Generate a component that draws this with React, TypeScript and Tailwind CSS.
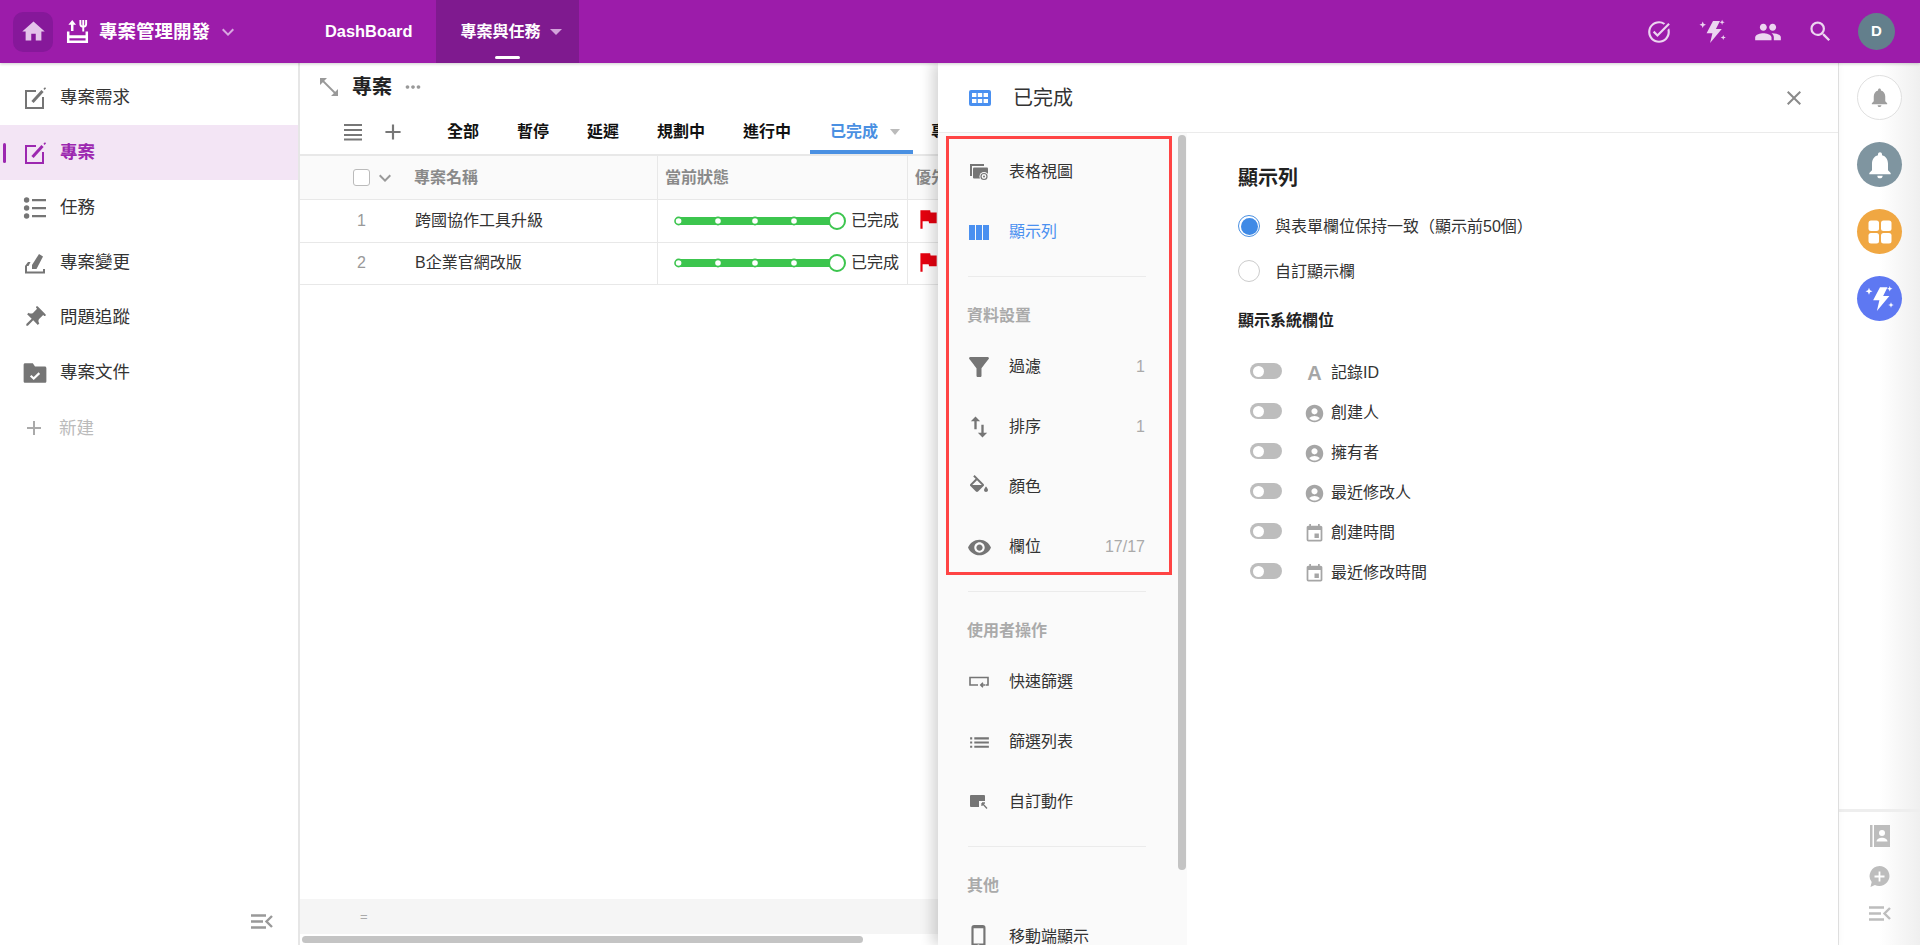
import { ReactNode } from "react";
import {
  MdAccountCircle,
  MdAdd,
  MdClose,
  MdEvent,
  MdFilterAlt,
  MdFlag,
  MdHome,
  MdKeyboardArrowDown,
  MdList,
  MdMoreHoriz,
  MdNotifications,
  MdOutlineTaskAlt,
  MdPeople,
  MdPhoneIphone,
  MdPushPin,
  MdSearch,
  MdSwapVert,
  MdVisibility,
} from "react-icons/md";

function AppIcon() {
  return (
    <svg width="23" height="23" viewBox="0 0 24 24" fill="currentColor">
      <path d="M6.5 0 L2.5 5 H5.2 V11.5 H7.8 V5 H10.5 Z" />
      <path d="M14 0 h2 v4.5 a1.6 1.6 0 0 0 1 1.4 V0 h2 v5.9 a1.6 1.6 0 0 0 1-1.4 V0 h2 v4.5 a3.6 3.6 0 0 1-3 3.4 V12 h-2 V7.9 a3.6 3.6 0 0 1-3-3.4z" />
      <path d="M1 12 h2.6 v4 h16.8 v-4 H23 v12 H1z M3.6 19 v2.4 h16.8 V19z" fillRule="evenodd" />
    </svg>
  );
}

function BoltStars({ size }: { size: number }) {
  return (
    <svg width={size} height={size} viewBox="0 0 24 24" fill="currentColor">
      <path d="M12 2.5 h6 L14.5 9.5 H19.5 L9.5 21.5 L11.5 13 H6.5 Z" />
      <path d="M3.2 3 l.8 2 2 .8-2 .8-.8 2-.8-2-2-.8 2-.8z" />
      <path d="M19.8 1.5 l.6 1.6 1.6.6-1.6.6-.6 1.6-.6-1.6-1.6-.6 1.6-.6z" />
      <path d="M20.8 14.5 l.6 1.6 1.6.6-1.6.6-.6 1.6-.6-1.6-1.6-.6 1.6-.6z" />
    </svg>
  );
}

function EditSquare() {
  return (
    <svg width="24" height="24" viewBox="0 0 24 24" fill="none" stroke="currentColor">
      <path d="M13 5H3v17h17V11" strokeWidth="2" />
      <path d="M9.5 16 L19.5 5" strokeWidth="3" />
      <path d="M21 3.4 L22.5 1.8" strokeWidth="1.6" />
    </svg>
  );
}

function TaskListIcon() {
  return (
    <svg width="24" height="24" viewBox="0 0 24 24" fill="currentColor">
      <circle cx="3.6" cy="4" r="2.7" />
      <circle cx="3.6" cy="12" r="2.7" />
      <circle cx="3.6" cy="20" r="2.7" />
      <path d="M9 3h14v2.2H9zM9 11h14v2.2H9zM9 19h14v2.2H9z" />
    </svg>
  );
}

function ChangeIcon() {
  return (
    <svg width="24" height="24" viewBox="0 0 24 24" fill="currentColor">
      <path d="M9 18 V14 L16 3 L20 5.6 L13.5 18z" />
      <path d="M5 11 h2.5 l-2 4 H4 v5.4 h16 V18 h2 v4.5 H2 v-7.5z" />
    </svg>
  );
}

function FolderCheck() {
  return (
    <svg width="26" height="26" viewBox="0 0 24 24" fill="currentColor">
      <path d="M10 3H3c-1 0-1.5.6-1.5 1.5v15c0 1 .6 1.5 1.5 1.5h18c1 0 1.5-.6 1.5-1.5V7.5c0-1-.6-1.5-1.5-1.5h-9z" />
      <path d="M8 14.5l2.8 2.6 5.2-5" fill="none" stroke="#fff" strokeWidth="2" />
    </svg>
  );
}

function CollapseIcon({ className = "" }: { className?: string }) {
  return (
    <svg width="22" height="15" viewBox="0 0 22 15" fill="none" stroke="currentColor" strokeWidth="2.4" className={className}>
      <path d="M0 1.5h15M0 7.5h12M0 13.5h15" />
      <path d="M21 2 L15.5 7.5 21 13" />
    </svg>
  );
}

function ExpandIcon() {
  return (
    <svg width="18" height="18" viewBox="0 0 18 18" fill="#999">
      <path d="M0 0h7L0 7zM18 18h-7l7-7z" />
      <path d="M3 3l12 12" stroke="#999" strokeWidth="1.8" />
    </svg>
  );
}

function Hamburger() {
  return (
    <svg width="18" height="18" viewBox="0 0 18 18" fill="#777">
      <path d="M0 1h18v2H0zM0 6h18v2H0zM0 11h18v2H0zM0 15.5h18v2H0z" />
    </svg>
  );
}

function TableIcon() {
  return (
    <svg width="22" height="16" viewBox="0 0 22 16">
      <rect width="22" height="16" rx="2" fill="#4a90f0" />
      <path d="M3 3h4.4v4H3zM8.8 3h4.4v4H8.8zM14.6 3H19v4h-4.4zM3 9h4.4v4H3zM8.8 9h4.4v4H8.8zM14.6 9H19v4h-4.4z" fill="#fff" />
    </svg>
  );
}

function TableViewIcon() {
  return (
    <svg width="20" height="17" viewBox="0 0 20 17" fill="currentColor">
      <path d="M1 0h14v2H3v10H1z" />
      <rect x="4" y="3.5" width="15" height="11" rx="1" />
      <circle cx="15" cy="12.5" r="4.5" fill="#fafafa" />
      <circle cx="15" cy="12.5" r="3" fill="none" stroke="currentColor" strokeWidth="1.2" />
      <circle cx="15" cy="12.5" r="1" />
    </svg>
  );
}

function ColumnsIcon() {
  return (
    <svg width="20" height="15" viewBox="0 0 20 15" fill="#4a90f0">
      <path d="M0 0h6v15H0zM7 0h6v15H7zM14 0h6v15h-6z" />
    </svg>
  );
}

function FillIcon() {
  return (
    <svg width="24" height="24" viewBox="0 0 24 24" fill="currentColor">
      <path d="M16.56 8.94L7.62 0 6.21 1.41l2.38 2.38-5.15 5.15c-.59.59-.59 1.54 0 2.12l5.5 5.5c.29.29.68.44 1.06.44s.77-.15 1.06-.44l5.5-5.5c.59-.58.59-1.53 0-2.12zM5.21 10L10 5.21 14.79 10H5.21zM19 11.5s-2 2.17-2 3.5c0 1.1.9 2 2 2s2-.9 2-2c0-1.33-2-3.5-2-3.5z" />
    </svg>
  );
}

function QuickFilterIcon() {
  return (
    <svg width="20" height="12" viewBox="0 0 20 12" fill="none" stroke="currentColor" strokeWidth="1.6">
      <path d="M9 9H1V1.5h18V9h-2.5" />
      <path d="M16 9h-4M14 6.8 11.8 9 14 11.2" />
    </svg>
  );
}

function CustomActionIcon() {
  return (
    <svg width="20" height="14" viewBox="0 0 20 14" fill="currentColor">
      <path d="M2 0h13a1 1 0 0 1 1 1v5H10v6H2a1 1 0 0 1-1-1V1a1 1 0 0 1 1-1z" />
      <path d="M13 8l5 5.5M13 8v3M13 8h3" fill="none" stroke="currentColor" strokeWidth="1.3" />
    </svg>
  );
}

function ContactBookIcon() {
  return (
    <svg width="20" height="22" viewBox="0 0 20 22" fill="#bdbdbd">
      <path d="M0 0h2.5v22H0z" />
      <path d="M4 0h16v22H4z" />
      <circle cx="12" cy="8" r="3" fill="#fff" />
      <path d="M6.5 16.5c0-2.5 3-3.8 5.5-3.8s5.5 1.3 5.5 3.8z" fill="#fff" />
    </svg>
  );
}

function AddCommentIcon() {
  return (
    <svg width="21" height="21" viewBox="0 0 21 21" fill="#bdbdbd">
      <path d="M10.5 0a10 10 0 1 1-4.6 18.9L1.5 21l1.2-4.9A10 10 0 0 1 10.5 0z" />
      <path d="M9.6 5.5h1.8v4.1h4.1v1.8h-4.1v4.1H9.6v-4.1H5.5V9.6h4.1z" fill="#fff" />
    </svg>
  );
}

function GridIcon() {
  return (
    <svg width="24" height="24" viewBox="0 0 24 24" fill="#fff">
      <rect x="0.5" y="0.5" width="10.5" height="10.5" rx="2.5" />
      <rect x="13" y="0.5" width="10.5" height="10.5" rx="2.5" />
      <rect x="0.5" y="13" width="10.5" height="10.5" rx="2.5" />
      <rect x="13" y="13" width="10.5" height="10.5" rx="2.5" />
    </svg>
  );
}

function StatusTrack() {
  return (
    <svg width="172" height="20" viewBox="0 0 172 20" className="shrink-0">
      <rect x="2" y="6" width="158" height="8" rx="4" fill="#3cc54e" />
      {[4.6, 44, 81, 120].map((cx) => (
        <circle key={cx} cx={cx} cy="10" r="3.6" fill="#fff" stroke="#3cc54e" strokeWidth="1.6" />
      ))}
      <circle cx="163" cy="10" r="8" fill="#fff" stroke="#3cc54e" strokeWidth="2" />
    </svg>
  );
}

const sidebarItems: { label: string; icon: ReactNode; active?: boolean }[] = [
  { label: "專案需求", icon: <EditSquare /> },
  { label: "專案", icon: <EditSquare />, active: true },
  { label: "任務", icon: <TaskListIcon /> },
  { label: "專案變更", icon: <ChangeIcon /> },
  { label: "問題追蹤", icon: <MdPushPin size={26} className="rotate-45 -ml-[3px]" /> },
  { label: "專案文件", icon: <FolderCheck /> },
];

function Sidebar() {
  return (
    <aside className="w-[300px] shrink-0 border-r-2 border-[#e6e6e6] bg-white flex flex-col justify-between">
      <nav className="pt-[7px]">
        {sidebarItems.map((item) => (
          <div
            key={item.label}
            className={`relative h-[55px] pl-[23px] flex items-center gap-[13px] text-[17.5px] ${
              item.active ? "bg-[#f3e5f5] text-[#9c27b0] font-bold" : "text-[#333] "
            }`}
          >
            {item.active && <span className="absolute left-[3px] top-[18px] w-[3px] h-[20px] rounded-full bg-[#9c27b0]" />}
            <span className={`w-[24px] flex justify-center shrink-0 [&>svg]:shrink-0 ${item.active ? "text-[#9c27b0]" : "text-[#757575]"}`}>
              {item.icon}
            </span>
            {item.label}
          </div>
        ))}
        <div className="h-[55px] pl-[23px] pt-[1px] flex items-center gap-[12px] text-[17.5px] text-[#bbb]">
          <span className="w-[24px] -ml-[1px] flex justify-center shrink-0 text-[#aaa]">
            <MdAdd size={24} />
          </span>
          <span className="ml-[1px]">新建</span>
        </div>
      </nav>
      <div className="flex justify-end pr-[25px] pb-[16px] text-[#999]">
        <CollapseIcon />
      </div>
    </aside>
  );
}

const tabs = ["全部", "暫停", "延遲", "規劃中", "進行中"];

const rows = [
  { id: 1, name: "跨國協作工具升級" },
  { id: 2, name: "B企業官網改版" },
];

function MainArea() {
  return (
    <main className="w-[638px] shrink-0 overflow-hidden flex flex-col bg-white">
      <div className="h-[47px] shrink-0 flex items-center pl-[20px]">
        <ExpandIcon />
        <span className="ml-[14px] text-[20px] font-bold text-[#222]">專案</span>
        <MdMoreHoriz size={22} className="ml-[10px] text-[#999]" />
      </div>
      <div className="h-[46px] shrink-0 flex items-stretch pl-[44px] border-b-2 border-[#e8e8e8] whitespace-nowrap">
        <div className="flex items-center">
          <Hamburger />
          <MdAdd size={26} className="ml-[18px] text-[#777]" />
        </div>
        <div className="ml-[22px] flex items-stretch text-[16px] font-bold text-[#111]">
          {tabs.map((tab) => (
            <div key={tab} className="px-[19px] pt-[4px] flex items-center border-b-4 border-transparent">
              {tab}
            </div>
          ))}
          <div className="w-[103px] shrink-0 pl-[20px] pt-[4px] flex items-center border-b-4 border-[#4a90e2] text-[#4a90e2]">
            已完成
            <span className="ml-[12px] w-0 h-0 border-x-[5px] border-x-transparent border-t-[6px] border-t-[#bbb]" />
          </div>
          <div className="px-[18px] pt-[4px] flex items-center border-b-4 border-transparent">專案</div>
        </div>
      </div>
      <div className="h-[44px] shrink-0 flex border-b border-[#e8e8e8] bg-[#fafafa] text-[16px] font-bold text-[#8a8a8a]">
        <div className="w-[357px] flex items-center pl-[53px] shrink-0">
          <span className="w-[17px] h-[17px] rounded-[3px] border border-[#bbb] bg-white" />
          <MdKeyboardArrowDown size={24} className="ml-[3px] text-[#999]" />
          <span className="ml-[17px]">專案名稱</span>
        </div>
        <div className="w-[250px] shrink-0 border-l border-[#e8e8e8] pl-[7px] flex items-center">當前狀態</div>
        <div className="flex-1 border-l border-[#e8e8e8] pl-[7px] flex items-center whitespace-nowrap">優先級</div>
      </div>
      {rows.map((row) => (
        <div key={row.id} className="h-[42.5px] shrink-0 flex border-b border-[#e8e8e8] text-[16px] text-[#333]">
          <div className="w-[357px] shrink-0 flex items-center">
            <span className="w-[115px] pl-[8px] text-center text-[#999]">{row.id}</span>
            {row.name}
          </div>
          <div className="w-[250px] shrink-0 border-l border-[#e8e8e8] pl-[16px] flex items-center whitespace-nowrap">
            <StatusTrack />
            <span className="ml-[5px]">已完成</span>
          </div>
          <div className="flex-1 border-l border-[#e8e8e8] pl-[7px] flex items-center">
            <MdFlag size={26} className="mb-[3px] text-[#e5000f] shrink-0" />
          </div>
        </div>
      ))}
      <div className="flex-1" />
      <div className="h-[35px] shrink-0 bg-[#f5f5f5] flex items-center pl-[60px] text-[13px] text-[#aaa]">=</div>
      <div className="h-[11px] shrink-0 pl-[2px] pt-[2px]">
        <div className="w-[561px] h-[7px] rounded-full bg-[#c4c4c4]" />
      </div>
    </main>
  );
}

const viewItems: { label: string; icon: ReactNode; count?: string; active?: boolean }[][] = [
  [
    { label: "表格視圖", icon: <TableViewIcon /> },
    { label: "顯示列", icon: <ColumnsIcon />, active: true },
  ],
  [
    { label: "過濾", icon: <MdFilterAlt size={30} />, count: "1" },
    { label: "排序", icon: <MdSwapVert size={28} />, count: "1" },
    { label: "顏色", icon: <FillIcon /> },
    { label: "欄位", icon: <MdVisibility size={25} />, count: "17/17" },
  ],
  [
    { label: "快速篩選", icon: <QuickFilterIcon /> },
    { label: "篩選列表", icon: <MdList size={25} /> },
    { label: "自訂動作", icon: <CustomActionIcon /> },
  ],
  [{ label: "移動端顯示", icon: <MdPhoneIphone size={26} /> }],
];

const sectionTitles = ["", "資料設置", "使用者操作", "其他"];

function ViewMenu() {
  return (
    <div className="relative w-[249px] shrink-0 bg-[#fafafa] pt-[9px] overflow-hidden">
      {viewItems.map((group, i) => (
        <div key={i}>
          {i > 0 && (
            <>
              <div className="mt-[14px] ml-[30px] w-[178px] h-px bg-[#ebebeb]" />
              <div className="h-[60px] pt-[28px] pl-[29px] text-[16px] leading-[22px] font-bold text-[#aaa]">{sectionTitles[i]}</div>
            </>
          )}
          {group.map((item) => (
            <div
              key={item.label}
              className={`h-[60px] pl-[31px] pr-[42px] flex items-center text-[16px] ${
                item.active ? "text-[#4a90f0]" : "text-[#333]"
              }`}
            >
              <span className="w-[20px] shrink-0 flex justify-center text-[#757575] [&>svg]:shrink-0">{item.icon}</span>
              <span className="ml-[20px]">{item.label}</span>
              {item.count && <span className="ml-auto text-[#aaa]">{item.count}</span>}
            </div>
          ))}
        </div>
      ))}
      <div className="absolute left-[240px] top-[2px] w-[8px] h-[735px] rounded-full bg-[#c4c4c4]" />
      <div className="absolute left-[8px] top-[3px] w-[226px] h-[439px] border-[3px] border-[#ff4444]" />
    </div>
  );
}

const systemFields: { label: string; icon: ReactNode }[] = [
  { label: "記錄ID", icon: <span className="text-[20px] leading-none font-bold">A</span> },
  { label: "創建人", icon: <MdAccountCircle size={21} /> },
  { label: "擁有者", icon: <MdAccountCircle size={21} /> },
  { label: "最近修改人", icon: <MdAccountCircle size={21} /> },
  { label: "創建時間", icon: <MdEvent size={21} /> },
  { label: "最近修改時間", icon: <MdEvent size={21} /> },
];

function ColumnSettings() {
  return (
    <div className="flex-1 pl-[51px] pt-[31px] text-[16px] text-[#333]">
      <h2 className="text-[20px] leading-[28px] font-bold text-[#222]">顯示列</h2>
      <div className="mt-[12px] h-[44px] flex items-center">
        <span className="w-[22px] h-[22px] rounded-full border border-[#4a90e2] flex items-center justify-center shrink-0">
          <span className="w-[17px] h-[17px] rounded-full bg-[#3f8ae6]" />
        </span>
        <span className="ml-[15px] pt-[1px]">與表單欄位保持一致（顯示前50個）</span>
      </div>
      <div className="h-[46px] flex items-center">
        <span className="w-[22px] h-[22px] rounded-full border border-[#ccc] bg-white shrink-0" />
        <span className="ml-[15px] pt-[1px]">自訂顯示欄</span>
      </div>
      <h3 className="mt-[16px] leading-[22px] font-bold text-[#222]">顯示系統欄位</h3>
      <div className="mt-[21px] pl-[12px]">
        {systemFields.map((field) => (
          <div key={field.label} className="h-[40px] flex items-center">
            <span className="w-[32px] h-[16px] mb-[4px] rounded-full bg-[#bdbdbd] pl-[3px] flex items-center shrink-0">
              <span className="w-[11px] h-[11px] rounded-full bg-white" />
            </span>
            <span className="ml-[22px] w-[21px] flex justify-center text-[#a6a6a6] shrink-0">{field.icon}</span>
            <span className="ml-[6px]">{field.label}</span>
          </div>
        ))}
      </div>
    </div>
  );
}

function Drawer() {
  return (
    <section className="relative z-10 w-[900px] shrink-0 flex flex-col bg-white shadow-[-6px_0_12px_rgba(0,0,0,0.16)]">
      <header className="h-[70px] shrink-0 flex items-center pl-[31px] pr-[32px] border-b border-[#ebebeb]">
        <TableIcon />
        <span className="ml-[22px] text-[20px] text-[#333]">已完成</span>
        <MdClose size={24} className="ml-auto text-[#8a8a8a]" />
      </header>
      <div className="flex-1 min-h-0 flex">
        <ViewMenu />
        <ColumnSettings />
      </div>
    </section>
  );
}

function RightRail() {
  return (
    <aside className="flex-1 border-l border-[#e4e4e4] bg-gradient-to-r from-white from-50% to-[#efefef] flex flex-col items-center pt-[12px]">
      <div className="flex flex-col gap-[22px]">
        <span className="w-[45px] h-[45px] rounded-full border border-[#e0e0e0] bg-white flex items-center justify-center text-[#9e9e9e]">
          <MdNotifications size={23} />
        </span>
        <span className="w-[45px] h-[45px] rounded-full bg-[#7f95a0] flex items-center justify-center text-white">
          <MdNotifications size={32} />
        </span>
        <span className="w-[45px] h-[45px] rounded-full bg-[#f0a742] flex items-center justify-center">
          <GridIcon />
        </span>
        <span className="w-[45px] h-[45px] rounded-full bg-[#5e78f2] flex items-center justify-center text-white">
          <BoltStars size={30} />
        </span>
      </div>
      <div className="mt-auto w-full h-[136px] border-t-[3px] border-[#eeeeee] flex flex-col items-center pt-[13px] gap-[19px] text-[#bdbdbd]">
        <ContactBookIcon />
        <AddCommentIcon />
        <CollapseIcon />
      </div>
    </aside>
  );
}

function TopBar() {
  return (
    <header className="relative z-20 h-[63px] shrink-0 flex items-center pl-[13px] pr-[25px] bg-[#9c1caa] text-white shadow-[0_1px_3px_rgba(0,0,0,0.2)]">
      <button className="w-[40px] h-[40px] rounded-[10px] bg-[#86189a] flex items-center justify-center text-[#e4c3ea]">
        <MdHome size={27} />
      </button>
      <span className="ml-[13px]">
        <AppIcon />
      </span>
      <span className="ml-[10px] text-[18.5px] font-bold">專案管理開發</span>
      <MdKeyboardArrowDown size={24} className="ml-[6px] text-[#d8a8e0]" />
      <span className="ml-[85px] text-[16.4px] font-bold">DashBoard</span>
      <div className="relative ml-[24px] w-[143px] h-full bg-[#7f1a8f] pl-[24px] flex items-center">
        <span className="text-[16px] font-bold">專案與任務</span>
        <span className="ml-[10px] w-0 h-0 border-x-[6px] border-x-transparent border-t-[6px] border-t-[#d3a3db]" />
        <span className="absolute left-[59px] bottom-[4px] w-[25px] h-[3px] rounded-full bg-white" />
      </div>
      <div className="ml-auto flex items-center text-[#ecd5f0]">
        <MdOutlineTaskAlt size={26} />
        <span className="ml-[27px]">
          <BoltStars size={28} />
        </span>
        <MdPeople size={28} className="ml-[27px]" />
        <MdSearch size={27} className="ml-[25px]" />
        <span className="ml-[24px] w-[37px] h-[37px] rounded-full bg-[#637f8c] text-white text-[15px] font-bold flex items-center justify-center">D</span>
      </div>
    </header>
  );
}

export default function App() {
  return (
    <div className="w-full h-[945px] overflow-hidden flex flex-col bg-white font-['Liberation_Sans','Noto_Sans_CJK_TC',sans-serif]">
      <TopBar />
      <div className="flex-1 min-h-0 flex">
        <Sidebar />
        <MainArea />
        <Drawer />
        <RightRail />
      </div>
    </div>
  );
}
